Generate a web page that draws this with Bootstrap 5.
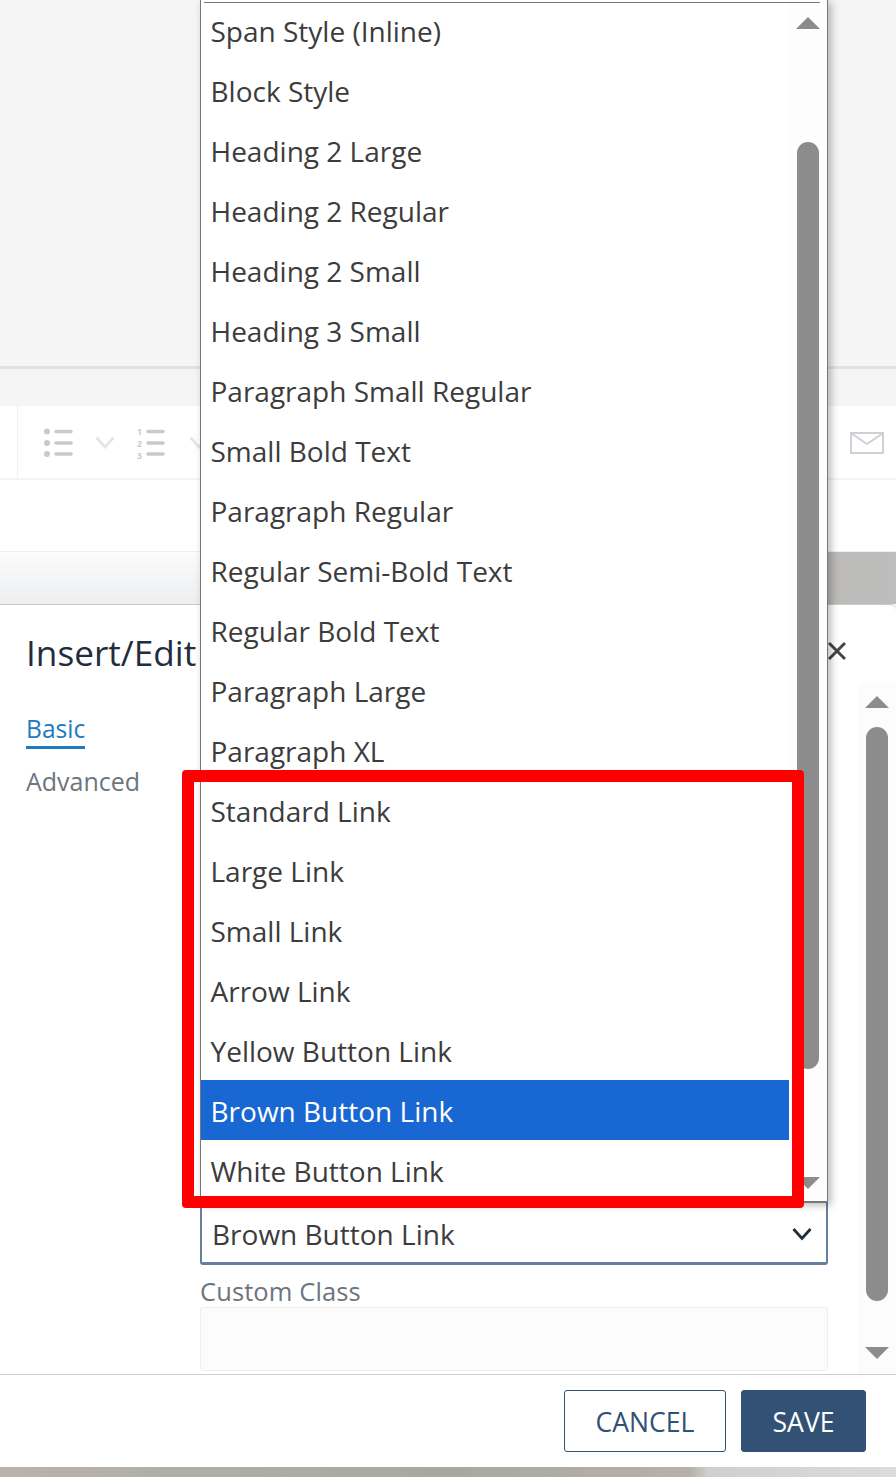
<!DOCTYPE html>
<html lang="en">
<head>
<meta charset="utf-8">
<title>Insert/Edit Link</title>
<link href="https://cdn.jsdelivr.net/npm/bootstrap@5.3.0/dist/css/bootstrap.min.css" rel="stylesheet">
<style>
html,body{margin:0;height:1477px;overflow:hidden;background:#f5f5f5}
body,button,input{font-family:"Open Sans","Noto Sans",sans-serif}
.stage{position:relative;width:896px;height:1477px;overflow:hidden;background:#f5f5f5;display:flex;flex-direction:column}
.top-area{height:366px;flex:none}
.top-rule{height:3px;background:#e1e1e1;flex:none}
.top-band{height:37px;flex:none}
.tool-strip{height:74px;flex:none;background:#fff;border-bottom:2px solid #f3f3f3;padding-left:17px}
.tool-set{border-left:1px solid #f1f1f1;height:72px;padding:1px 0 0 25px;gap:21px}
.mail-ico{margin:2px 12px 0 0}
.chev-second{margin-left:1px}
.blank-strip{height:72px;flex:none;background:#fff;border-bottom:1px solid #f0f0f0}
.photo-strip{height:52px;flex:none;background:linear-gradient(90deg,transparent 60%,#bcbbb8 92.4%,#bdbdbd 100%),linear-gradient(180deg,#fcfcfc,#eceef0)}
.dialog{height:863px;flex:none;background:#fff;border-top:1px solid #c9c9c9;border-radius:0 6px 0 0;display:flex;flex-direction:column}
.dialog-main{flex:1;min-height:0;position:relative;padding-left:26px}
.dialog-title{font-size:35.2px;line-height:46px;font-weight:400;color:#1f2d3d;padding-top:24px;margin:0}
.tab-list{display:flex;flex-direction:column;align-items:flex-start;margin-top:37px;font-size:25px;line-height:34px}
.tab-on{color:#1e7bbf;border-bottom:3px solid #1e7bbf;text-decoration:none;font-size:24.6px;line-height:34px;height:37px;display:block}
.tab-off{color:#6c757d;text-decoration:none;margin-top:15px;line-height:34px}
.dialog-foot{height:93px;flex:none;border-top:1px solid #cfcfcf;padding:15px 30px 0 0;gap:15px}
.btn-cancel,.btn-save{height:62px;font-size:26.6px;border-radius:3px;text-transform:uppercase;padding:2px 0 0;line-height:1}
.btn-cancel{width:162px;background:#fff;color:#335075;border:1px solid #335075}
.btn-save{width:125px;background:#335075;color:#fff;border:1px solid #335075}
.photo-foot{height:10px;flex:none;background:linear-gradient(90deg,#b7b2ad,#aaa7a3 50%,#b6b0a9 77%,#cfcfcf 79%,#dcdcdc)}
.x-close{position:absolute;left:828px;top:36px}
.side-scroll{position:absolute;left:858px;top:78px;width:38px;height:691px;background:#fcfcfc}
.thumb-outer{position:absolute;left:8px;top:44px;width:22px;height:574px;background:#8c8c8c;border-radius:11px}
.arr{position:absolute;width:0;height:0;border-left:12px solid transparent;border-right:12px solid transparent}
.arr-up{border-bottom:12px solid #8c8c8c}
.arr-down{border-top:12px solid #8c8c8c}
.side-up{left:7px;top:13px}
.side-down{left:7px;top:664px}
.field-label{position:absolute;left:200px;top:1276px;font-size:25.5px;line-height:30px;letter-spacing:.1px;color:#6c757d}
.field-box{position:absolute;left:200px;top:1307px;width:628px;height:64px;background:#fcfcfc;border:1px solid #eee;border-radius:3px}
.select-box{position:absolute;left:200px;top:1201px;width:628px;height:64px;background:#fff;border:2px solid #667f9f;border-bottom-width:3px;border-radius:3px;padding:2px 14px 0 11px;font-size:28px;color:#3c3c3c}
.select-box span{margin-left:-1px}
.style-menu{position:absolute;left:200px;top:0;width:628px;height:1203px;background:#fff;border-style:solid;border-width:0 2px 2px 1px;border-color:#777;box-shadow:3px 2px 8px rgba(0,0,0,.28)}
.menu-rule{position:absolute;left:3px;right:6px;top:2px;height:1px;background:#777}
.menu-items{width:588px;background:transparent;border-radius:0}
.menu-items .list-group-item{height:60px;margin-top:0;border:0;border-radius:0;padding:0 9.5px;font-size:28px;line-height:62.5px;color:#3c3c3c;background:#fff;white-space:nowrap}
.menu-items .list-group-item+.list-group-item.active{margin-top:0;background:#1967d2;color:#fff}
.menu-scroll{position:absolute;left:588px;top:0;width:38px;height:1201px;background:#fdfdfd}
.menu-thumb{position:absolute;left:8px;top:142px;width:22px;height:927px;background:#8c8c8c;border-radius:11px}
.menu-up{left:7px;top:17px}
.menu-down{left:7px;top:1177px}
.red-frame{position:absolute;left:182px;top:770px;width:622px;height:438px;border:12px solid #f00;border-radius:4px}
</style>
</head>
<body>
<div class="stage">
  <div class="top-area"></div>
  <div class="top-rule"></div>
  <div class="top-band"></div>
  <div class="tool-strip d-flex align-items-start justify-content-between">
    <div class="tool-set d-flex align-items-center">
      <svg width="31" height="32" viewBox="0 0 31 32"><g fill="#c9cacd"><circle cx="4" cy="4.5" r="3"/><circle cx="4" cy="16" r="3"/><circle cx="4" cy="27" r="3"/></g><g stroke="#c9cacd" stroke-width="3.6" stroke-linecap="round"><path d="M13 4.5h15M13 16h15M13 27h15"/></g></svg>
      <svg width="21" height="13" viewBox="0 0 21 13"><path d="M1.5 1.5 10 11 18.5 1.5" fill="none" stroke="#e4e5e7" stroke-width="2.8"/></svg>
      <svg width="30" height="34" viewBox="0 0 30 34"><g fill="#c9cacd" font-family="Open Sans,sans-serif" font-size="8.5" font-weight="700"><text x="0" y="9">1</text><text x="0" y="21">2</text><text x="0" y="32.5">3</text></g><g stroke="#c9cacd" stroke-width="3.6" stroke-linecap="round"><path d="M11 5.5h15M11 17h15M11 28h15"/></g></svg>
      <svg class="chev-second" width="21" height="13" viewBox="0 0 21 13"><path d="M1.5 1.5 10 11 18.5 1.5" fill="none" stroke="#e4e5e7" stroke-width="2.8"/></svg>
    </div>
    <svg class="mail-ico align-self-center" width="34" height="22" viewBox="0 0 34 22"><rect x="1" y="1" width="32" height="20" fill="none" stroke="#ced2d6" stroke-width="2"/><path d="M1.5 1.5 17 12 32.5 1.5" fill="none" stroke="#ced2d6" stroke-width="2"/></svg>
  </div>
  <div class="blank-strip"></div>
  <div class="photo-strip"></div>
  <section class="dialog">
    <div class="dialog-main">
      <h5 class="dialog-title">Insert/Edit</h5>
      <div class="tab-list">
        <a class="tab-on" href="#">Basic</a>
        <a class="tab-off" href="#">Advanced</a>
      </div>
      <svg class="x-close" width="18" height="20" viewBox="0 0 18 20"><path d="M1 2 17 18M17 2 1 18" stroke="#444" stroke-width="3" fill="none"/></svg>
      <div class="side-scroll">
        <span class="arr arr-up side-up"></span>
        <div class="thumb-outer"></div>
        <span class="arr arr-down side-down"></span>
      </div>
    </div>
    <div class="dialog-foot d-flex justify-content-end align-items-start">
      <button class="btn btn-cancel" type="button">Cancel</button>
      <button class="btn btn-save" type="button">Save</button>
    </div>
  </section>
  <div class="photo-foot"></div>

  <div class="field-label">Custom Class</div>
  <div class="field-box"></div>
  <div class="select-box d-flex align-items-center justify-content-between">
    <span>Brown Button Link</span>
    <svg width="20" height="14" viewBox="0 0 20 14"><path d="M1.5 2 10 11.5 18.5 2" fill="none" stroke="#1f2d3d" stroke-width="2.8"/></svg>
  </div>
  <div class="style-menu">
    <div class="list-group menu-items">
      <div class="list-group-item">Span Style (Inline)</div>
      <div class="list-group-item">Block Style</div>
      <div class="list-group-item">Heading 2 Large</div>
      <div class="list-group-item">Heading 2 Regular</div>
      <div class="list-group-item">Heading 2 Small</div>
      <div class="list-group-item">Heading 3 Small</div>
      <div class="list-group-item">Paragraph Small Regular</div>
      <div class="list-group-item">Small Bold Text</div>
      <div class="list-group-item">Paragraph Regular</div>
      <div class="list-group-item">Regular Semi-Bold Text</div>
      <div class="list-group-item">Regular Bold Text</div>
      <div class="list-group-item">Paragraph Large</div>
      <div class="list-group-item">Paragraph XL</div>
      <div class="list-group-item">Standard Link</div>
      <div class="list-group-item">Large Link</div>
      <div class="list-group-item">Small Link</div>
      <div class="list-group-item">Arrow Link</div>
      <div class="list-group-item">Yellow Button Link</div>
      <div class="list-group-item active">Brown Button Link</div>
      <div class="list-group-item">White Button Link</div>
    </div>
    <div class="menu-scroll">
      <span class="arr arr-up menu-up"></span>
      <div class="menu-thumb"></div>
      <span class="arr arr-down menu-down"></span>
    </div>
    <div class="menu-rule"></div>
  </div>
  <div class="red-frame"></div>
</div>
<script src="https://cdn.jsdelivr.net/npm/bootstrap@5.3.0/dist/js/bootstrap.bundle.min.js"></script>
</body>
</html>
